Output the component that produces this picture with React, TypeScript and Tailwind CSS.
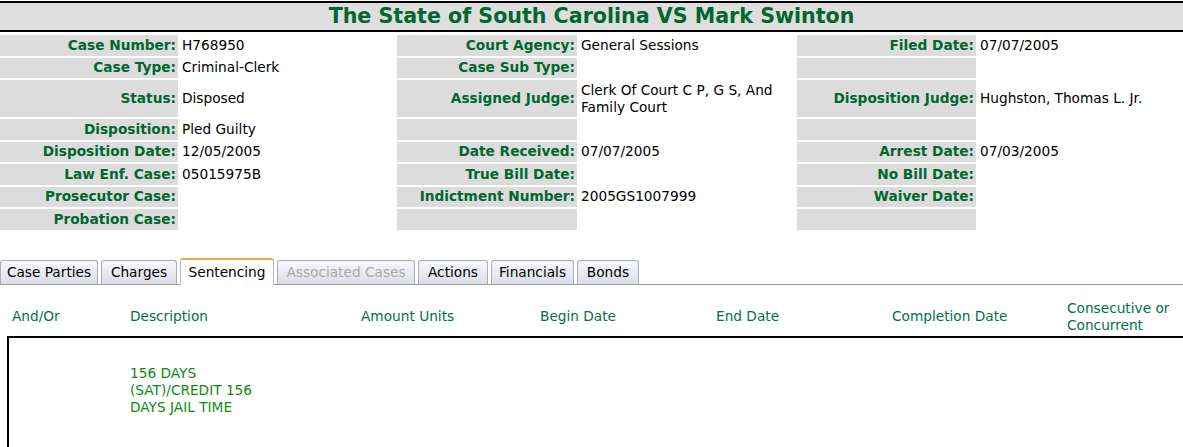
const font = "font-['DejaVu_Sans','Verdana',sans-serif]";

type Cell = { label: string; value?: string };

const rows: { cells: Cell[]; tall?: boolean }[] = [
  {
    cells: [
      { label: "Case Number:", value: "H768950" },
      { label: "Court Agency:", value: "General Sessions" },
      { label: "Filed Date:", value: "07/07/2005" },
    ],
  },
  {
    cells: [
      { label: "Case Type:", value: "Criminal-Clerk" },
      { label: "Case Sub Type:" },
      { label: "" },
    ],
  },
  {
    tall: true,
    cells: [
      { label: "Status:", value: "Disposed" },
      { label: "Assigned Judge:", value: "Clerk Of Court C P, G S, And Family Court" },
      { label: "Disposition Judge:", value: "Hughston, Thomas L. Jr." },
    ],
  },
  {
    cells: [
      { label: "Disposition:", value: "Pled Guilty" },
      { label: "" },
      { label: "" },
    ],
  },
  {
    cells: [
      { label: "Disposition Date:", value: "12/05/2005" },
      { label: "Date Received:", value: "07/07/2005" },
      { label: "Arrest Date:", value: "07/03/2005" },
    ],
  },
  {
    cells: [
      { label: "Law Enf. Case:", value: "05015975B" },
      { label: "True Bill Date:" },
      { label: "No Bill Date:" },
    ],
  },
  {
    cells: [
      { label: "Prosecutor Case:" },
      { label: "Indictment Number:", value: "2005GS1007999" },
      { label: "Waiver Date:" },
    ],
  },
  {
    cells: [{ label: "Probation Case:" }, { label: "" }, { label: "" }],
  },
];

const tabs = [
  { name: "Case Parties", w: "w-[98px]" },
  { name: "Charges", w: "w-[76px]" },
  { name: "Sentencing", w: "w-[94px]", active: true },
  { name: "Associated Cases", w: "w-[138px]", disabled: true },
  { name: "Actions", w: "w-[70px]" },
  { name: "Financials", w: "w-[83px]" },
  { name: "Bonds", w: "w-[62px]" },
];

const headers = [
  "And/Or",
  "Description",
  "Amount Units",
  "Begin Date",
  "End Date",
  "Completion Date",
  "Consecutive or Concurrent",
];

export default function App() {
  return (
    <div className={`${font} h-[447px] w-[1183px] overflow-hidden bg-white text-[13.7px] leading-[17px] text-black`}>
      {/* caption */}
      <div className="mt-px flex h-[31px] items-center justify-center border-y-2 border-black bg-[#dedede]">
        <h1 className="text-[20.6px] font-bold leading-none text-[#006633]">
          The State of South Carolina VS Mark Swinton
        </h1>
      </div>

      {/* case details */}
      <div className="mt-[3px] grid grid-cols-[178px_215px_180px_216px_179px_1fr] gap-[2px]">
        {rows.map((row, i) =>
          row.cells.map((c, j) => (
            <div key={`${i}-${j}`} className="contents">
              <div
                className={`flex items-center justify-end bg-[#dcdcdc] pr-[2px] font-bold text-[#006633] ${
                  row.tall ? "min-h-[37px]" : "min-h-[20.5px]"
                }`}
              >
                {c.label}
              </div>
              <div className={`flex items-center pl-[2px] ${j === 1 ? "pr-[4px]" : ""}`}>{c.value}</div>
            </div>
          ))
        )}
      </div>

      {/* tabs */}
      <div className="mt-[28px] flex items-end border-b border-[#9a9a9a]">
        {tabs.map((t) => (
          <div
            key={t.name}
            className={`mr-[3px] flex items-center justify-center rounded-t-[3px] border border-b-0 ${t.w} ${
              t.active
                ? "-mb-px h-[27px] border-[#b5b9c6] border-t-2 border-t-[#f2a83a] bg-white"
                : "h-[24px] border-[#a9aebd] bg-gradient-to-b from-[#f7f7fb] to-[#dcdde8]"
            } ${t.disabled ? "text-[#a8a8a8]" : "text-black"}`}
          >
            {t.name}
          </div>
        ))}
      </div>

      {/* sentencing header */}
      <div className="mt-[11px] grid h-[40px] grid-cols-[118px_231px_179px_176px_176px_175px_1fr] items-center pl-[12px] pt-[2px] text-[#00704a]">
        {headers.map((h) => (
          <div key={h} className={h.startsWith("Consecutive") ? "w-[115px]" : ""}>
            {h}
          </div>
        ))}
      </div>

      {/* sentencing rows */}
      <div className="ml-[7px] h-[120px] border-l-2 border-t-2 border-black">
        <div className="grid grid-cols-[121px_1fr] pt-[27px]">
          <div />
          <div className="text-[#108a10]">
            156 DAYS
            <br />
            (SAT)/CREDIT 156
            <br />
            DAYS JAIL TIME
          </div>
        </div>
      </div>
    </div>
  );
}
